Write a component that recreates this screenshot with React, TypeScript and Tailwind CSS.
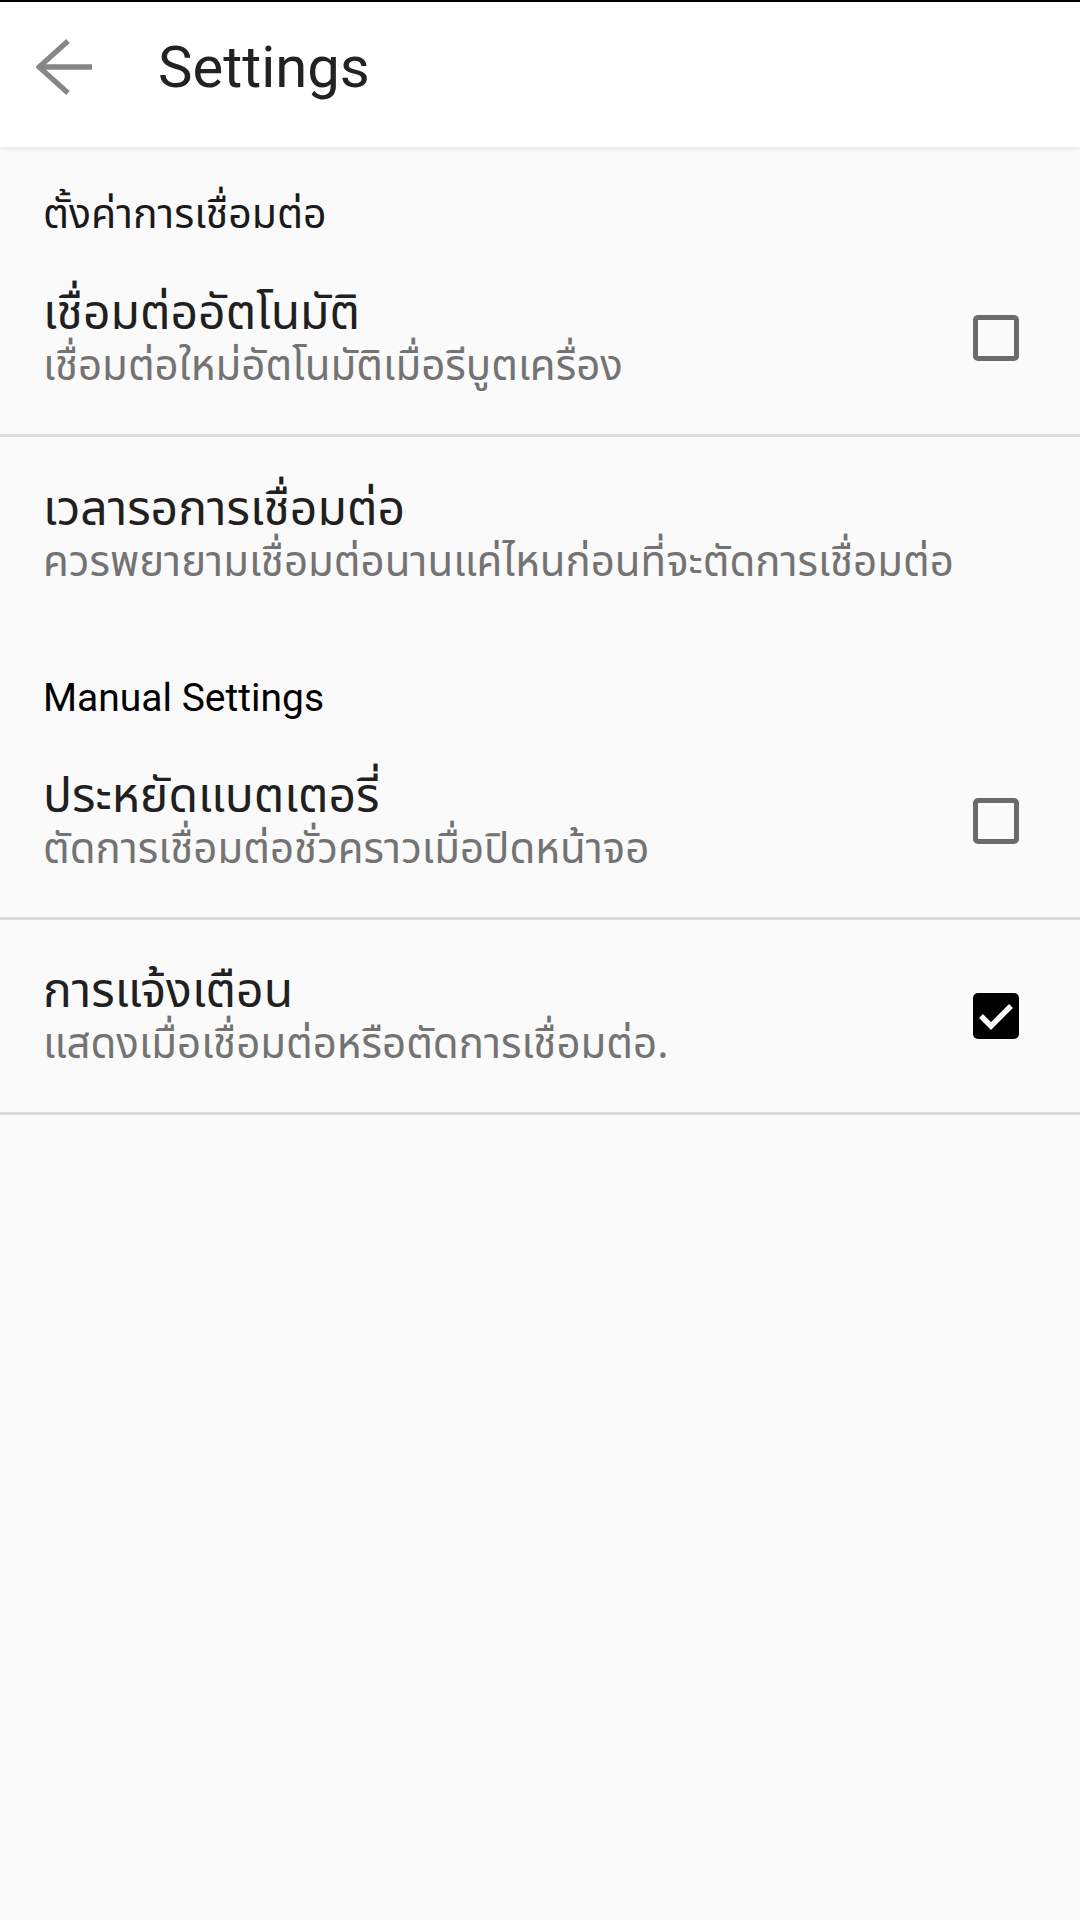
import React from "react";

type Pref = {
  title: string;
  summary: string;
  checked?: boolean;
  divider?: boolean;
};

const connection: Pref[] = [
  {
    title: "เชื่อมต่ออัตโนมัติ",
    summary: "เชื่อมต่อใหม่อัตโนมัติเมื่อรีบูตเครื่อง",
    checked: false,
    divider: true,
  },
  {
    title: "เวลารอการเชื่อมต่อ",
    summary: "ควรพยายามเชื่อมต่อนานแค่ไหนก่อนที่จะตัดการเชื่อมต่อ",
  },
];

const manual: Pref[] = [
  {
    title: "ประหยัดแบตเตอรี่",
    summary: "ตัดการเชื่อมต่อชั่วคราวเมื่อปิดหน้าจอ",
    checked: false,
    divider: true,
  },
  {
    title: "การแจ้งเตือน",
    summary: "แสดงเมื่อเชื่อมต่อหรือตัดการเชื่อมต่อ.",
    checked: true,
    divider: true,
  },
];

function CheckBox({ checked }: { checked: boolean }) {
  if (checked) {
    return (
      <div className="w-[46px] h-[46px] rounded-[5px] bg-black flex items-center justify-center">
        <svg width="46" height="46" viewBox="0 0 46 46">
          <polyline
            points="8,23 18,33 38,13"
            fill="none"
            stroke="#fff"
            strokeWidth="5.5"
          />
        </svg>
      </div>
    );
  }
  return (
    <div className="w-[46px] h-[46px] rounded-[5px] border-[5px] border-[#6b6b6b]" />
  );
}

function SectionTitle({ children }: { children: React.ReactNode }) {
  return (
    <div className="h-[95px] pl-[43px] pt-[46px]">
      <div className="text-[41px] leading-[44px] text-[#1a1a1a]">{children}</div>
    </div>
  );
}

function PrefRow({ pref }: { pref: Pref }) {
  return (
    <div
      className={
        pref.divider
          ? "h-[195px] flex items-center border-b-[3px] border-[#dcdcdc]"
          : "h-[193px] flex items-center"
      }
    >
      <div className="flex-1 pl-[43px] pt-[6px]">
        <div className="text-[48px] leading-[52px] text-[#202020]">{pref.title}</div>
        <div className="text-[42px] leading-[52px] text-[#737373]">{pref.summary}</div>
      </div>
      {pref.checked !== undefined && (
        <div className="w-[46px] mr-[61px] shrink-0">
          <CheckBox checked={pref.checked} />
        </div>
      )}
    </div>
  );
}

export default function App() {
  return (
    <div className="min-h-[1920px] bg-[#fafafa] font-['Noto_Sans_Thai','Noto_Sans_Thai_UI',Roboto,sans-serif]">
      <div className="h-[2px] bg-black" />
      <header className="h-[145px] bg-white shadow-[0_2px_4px_rgba(0,0,0,0.08)] relative">
        <div className="h-[130px] flex items-center pl-[36px]">
          <svg width="60" height="58" viewBox="0 0 60 58">
            <path
              d="M3 29H56M32 3L3 29L32 55"
              fill="none"
              stroke="#868686"
              strokeWidth="5.3"
            />
          </svg>
          <h1 className="ml-[62px] text-[58px] leading-none text-[#222] font-['Roboto',sans-serif]">
            Settings
          </h1>
        </div>
      </header>

      <SectionTitle>ตั้งค่าการเชื่อมต่อ</SectionTitle>
      {connection.map((p) => (
        <PrefRow key={p.title} pref={p} />
      ))}

      <SectionTitle>
        <span className="font-['Roboto',sans-serif] text-[39px] text-black">Manual Settings</span>
      </SectionTitle>
      {manual.map((p) => (
        <PrefRow key={p.title} pref={p} />
      ))}
    </div>
  );
}
